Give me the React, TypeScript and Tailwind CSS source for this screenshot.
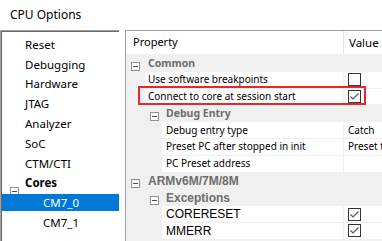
import React from "react";

const FONT = { fontFamily: '"Noto Sans", "Open Sans", sans-serif' };
const ARIAL = { fontFamily: '"Liberation Sans", Arial, sans-serif' };

function MinusBox() {
  return (
    <span className="inline-flex items-center justify-center w-[9px] h-[9px] border border-[#919191] bg-white shrink-0">
      <span className="block w-[5px] h-px bg-[#4d4d4d]" />
    </span>
  );
}

function Check({ checked }: { checked: boolean }) {
  return (
    <span className="flex items-center justify-center w-[13px] h-[13px] border border-[#333333] bg-white">
      {checked && (
        <svg width="11" height="11" viewBox="0 0 11 11">
          <path d="M1.5 5.5 L4 8 L9.5 2.5" fill="none" stroke="#5a5a5a" strokeWidth="1.2" />
        </svg>
      )}
    </span>
  );
}

type Row =
  | { kind: "cat"; level: 0 | 1; label: string; arial?: boolean }
  | { kind: "prop"; level: 0 | 1; label: string; value?: React.ReactNode; arial?: boolean };

const rows: Row[] = [
  { kind: "cat", level: 0, label: "Common" },
  { kind: "prop", level: 0, label: "Use software breakpoints", value: <Check checked={false} /> },
  { kind: "prop", level: 0, label: "Connect to core at session start", value: <Check checked /> },
  { kind: "cat", level: 1, label: "Debug Entry" },
  { kind: "prop", level: 1, label: "Debug entry type", value: <span>Catch</span> },
  { kind: "prop", level: 1, label: "Preset PC after stopped in init", value: <span className="whitespace-nowrap">Preset to entry</span> },
  { kind: "prop", level: 1, label: "PC Preset address", value: null },
  { kind: "cat", level: 0, label: "ARMv6M/7M/8M", arial: true },
  { kind: "cat", level: 1, label: "Exceptions", arial: true },
  { kind: "prop", level: 1, label: "CORERESET", value: <Check checked />, arial: true },
  { kind: "prop", level: 1, label: "MMERR", value: <Check checked />, arial: true },
];

const treeItems: { label: string; indent: number; bold?: boolean; expander?: boolean; selected?: boolean }[] = [
  { label: "Reset", indent: 25 },
  { label: "Debugging", indent: 25 },
  { label: "Hardware", indent: 25 },
  { label: "JTAG", indent: 25 },
  { label: "Analyzer", indent: 25 },
  { label: "SoC", indent: 25 },
  { label: "CTM/CTI", indent: 25 },
  { label: "Cores", indent: 25, bold: true, expander: true },
  { label: "CM7_0", indent: 43, selected: true },
  { label: "CM7_1", indent: 43 },
];

export default function App() {
  return (
    <div className="relative w-[382px] h-[241px] overflow-hidden bg-white text-black" style={FONT}>
      <div className="h-[30px] pl-[10px] flex items-center text-[12px]">CPU Options</div>
      <div className="flex h-[211px]">
        {/* Left tree panel */}
        <div className="w-[120px] shrink-0 border-t border-l border-[#a0a0a0] border-r border-r-white border-b-0">
          <div className="h-full border-t border-l border-[#696969] bg-white pt-[4px] text-[11.5px]">
            {treeItems.map((it) => (
              <div
                key={it.label}
                className={`relative h-[16.8px] mb-[3px] flex items-center ${it.selected ? "bg-[#0078d7] text-white" : ""}`}
              >
                {it.expander && (
                  <span className="absolute left-[8px] top-[4px]">
                    <MinusBox />
                  </span>
                )}
                <span className={`${it.bold ? "font-bold" : ""}`} style={{ marginLeft: it.indent - 2 }}>
                  {it.label}
                </span>
              </div>
            ))}
          </div>
        </div>
        <div className="w-[5px] shrink-0" />
        {/* Right property grid */}
        <div className="flex-1 border-t border-l border-[#a0a0a0] bg-[#f0f0f0] text-[10px]">
          <div className="h-[23px] flex bg-white text-[11px]">
            <div className="w-[217px] pl-[7px] flex items-center">Property</div>
            <div className="w-px bg-[#e5e5e5]" />
            <div className="flex-1 pl-[5px] flex items-center text-[11.5px]">Value</div>
          </div>
          <div className="pt-px">
            {rows.map((r) => {
              const st = r.arial ? ARIAL : undefined;
              if (r.kind === "cat") {
                return (
                  <div key={r.label} className="h-[16.8px] flex items-center" style={st}>
                    <span style={{ marginLeft: r.level === 0 ? 5 : 24 }}>
                      <MinusBox />
                    </span>
                    <span
                      className="font-bold text-[#6d6d6d]"
                      style={{ marginLeft: r.level === 0 ? 8 : 7, fontSize: r.arial ? 12 : 10.5 }}
                    >
                      {r.label}
                    </span>
                  </div>
                );
              }
              return (
                <div key={r.label} className="h-[16.8px] flex pb-px" style={st}>
                  <div style={{ width: r.level === 0 ? 19 : 36 }} className="shrink-0" />
                  <div
                    className="flex-1 bg-white flex items-center whitespace-nowrap overflow-hidden"
                    style={{ paddingLeft: r.level === 0 ? 3 : 4, fontSize: r.arial ? 12 : undefined }}
                  >
                    {r.label}
                  </div>
                  <div className="w-px" />
                  <div className="w-[38px] shrink-0 bg-white flex items-center pl-[4px] overflow-hidden whitespace-nowrap">
                    {r.value}
                  </div>
                </div>
              );
            })}
          </div>
        </div>
      </div>
      {/* annotation */}
      <div className="absolute left-[138px] top-[86px] w-[228px] h-[19px] border-2 border-[#e8272b] pointer-events-none" />
    </div>
  );
}
